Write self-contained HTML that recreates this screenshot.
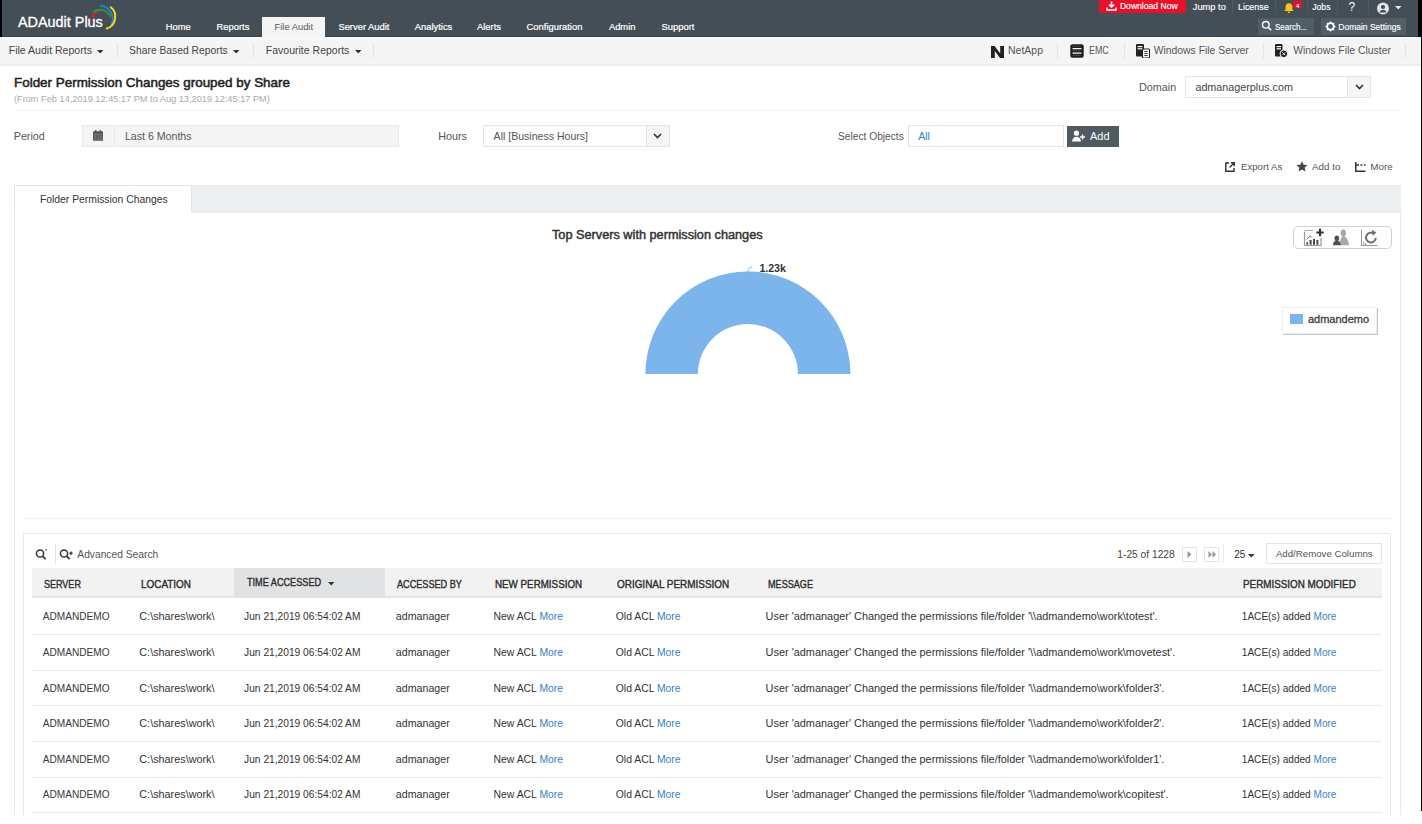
<!DOCTYPE html>
<html><head><meta charset="utf-8"><title>ADAudit Plus</title>
<style>
html,body{margin:0;padding:0;width:1422px;height:824px;overflow:hidden;background:#fff;font-family:"Liberation Sans",sans-serif;}
.t{position:absolute;white-space:nowrap;line-height:1;}
.r{position:absolute;}
.lk{color:#3a80c8;}
</style></head><body>
<div class="r" style="left:0px;top:0px;width:1422px;height:37px;background:#434e56;"></div>
<div class="r" style="left:0px;top:35.5px;width:1418px;height:1.5px;background:#3a444b;"></div>
<div class="r" style="left:0px;top:0px;width:2px;height:37px;background:#000;"></div>
<div class="r" style="left:1418px;top:0px;width:4px;height:37px;background:#000;"></div>
<div class="r" style="left:1421px;top:37px;width:1px;height:774px;background:#000;"></div>
<div class="t" style="left:18.00px;top:15.02px;font-size:14.4px;color:#fff;-webkit-text-stroke:0.35px #fff;">ADAudit Plus</div>
<svg class="r" style="left:88px;top:2px" width="34" height="32" viewBox="88 2 34 32">
<path d="M92.3 17.8 A9 9 0 0 1 108.8 15" stroke="#e8192c" stroke-width="1.8" fill="none"/>
<path d="M93.2 12 A11.6 11.6 0 0 1 110.8 17" stroke="#0aa544" stroke-width="1.9" fill="none"/>
<path d="M100.4 5.8 A13.2 13.2 0 0 1 110.8 25.8" stroke="#1f82d5" stroke-width="1.9" fill="none"/>
<path d="M110.2 6.8 A12.4 12.4 0 0 1 106 28.8" stroke="#fdd51b" stroke-width="2" fill="none"/>
</svg>
<div class="r" style="left:262px;top:16.5px;width:63px;height:20.5px;background:#f5f5f5;"></div>
<div class="t" style="left:165.80px;top:22.09px;font-size:9.4px;color:#fff;-webkit-text-stroke:0.2px #fff;">Home</div>
<div class="t" style="left:216.50px;top:22.09px;font-size:9.4px;color:#fff;-webkit-text-stroke:0.2px #fff;">Reports</div>
<div class="t" style="left:338.40px;top:22.09px;font-size:9.4px;color:#fff;-webkit-text-stroke:0.2px #fff;">Server Audit</div>
<div class="t" style="left:414.80px;top:22.09px;font-size:9.4px;color:#fff;-webkit-text-stroke:0.2px #fff;">Analytics</div>
<div class="t" style="left:477.00px;top:22.09px;font-size:9.4px;color:#fff;-webkit-text-stroke:0.2px #fff;">Alerts</div>
<div class="t" style="left:526.60px;top:22.09px;font-size:9.4px;color:#fff;-webkit-text-stroke:0.2px #fff;">Configuration</div>
<div class="t" style="left:608.90px;top:22.09px;font-size:9.4px;color:#fff;-webkit-text-stroke:0.2px #fff;">Admin</div>
<div class="t" style="left:661.60px;top:22.09px;font-size:9.4px;color:#fff;-webkit-text-stroke:0.2px #fff;">Support</div>
<div class="t" style="left:274.50px;top:22.09px;font-size:9.4px;color:#555;">File Audit</div>
<div class="r" style="left:1099px;top:0px;width:87px;height:12.6px;background:#e8102a;border-radius:0 0 2px 2px;"></div>
<svg class="r" style="left:1106px;top:1px" width="11" height="10" viewBox="0 0 11 10"><path d="M5.5 0.5v5.2M3 3.6l2.5 2.4 2.5-2.4" stroke="#fff" stroke-width="1.6" fill="none"/><path d="M1 6.5v2.5h9v-2.5" stroke="#fff" stroke-width="1.4" fill="none"/></svg>
<div class="t" style="left:1119.90px;top:1.93px;font-size:8.6px;color:#fff;-webkit-text-stroke:0.15px #fff;">Download Now</div>
<div class="t" style="left:1192.80px;top:2.65px;font-size:9.3px;color:#fff;-webkit-text-stroke:0.15px #fff;">Jump to</div>
<div class="r" style="left:1231.5px;top:0px;width:1px;height:14px;background:#505a62;"></div>
<div class="t" style="left:1238.00px;top:2.81px;font-size:8.9px;color:#fff;-webkit-text-stroke:0.15px #fff;">License</div>
<div class="r" style="left:1274.5px;top:0px;width:1px;height:14px;background:#505a62;"></div>
<svg class="r" style="left:1283px;top:2px" width="12" height="12" viewBox="0 0 12 12"><path d="M6 1.2c-2.2 0-3.4 1.7-3.4 3.6v2.6L1.3 9h9.4L9.4 7.4V4.8C9.4 2.9 8.2 1.2 6 1.2z" fill="#f5c518"/><rect x="4.8" y="9.4" width="2.4" height="1.5" rx="0.7" fill="#f5c518"/></svg>
<div class="r" style="left:1293px;top:1px;width:9px;height:6.5px;background:#e8102a;"></div>
<div class="t" style="left:1296.00px;top:2.52px;font-size:6px;font-weight:700;color:#fff;">4</div>
<div class="r" style="left:1306.5px;top:0px;width:1px;height:14px;background:#505a62;"></div>
<div class="t" style="left:1312.30px;top:2.93px;font-size:8.6px;color:#fff;-webkit-text-stroke:0.15px #fff;">Jobs</div>
<div class="r" style="left:1336.5px;top:0px;width:1px;height:14px;background:#505a62;"></div>
<div class="t" style="left:1348.60px;top:1.01px;font-size:12px;color:#fff;">?</div>
<div class="r" style="left:1368px;top:0px;width:1px;height:14px;background:#505a62;"></div>
<svg class="r" style="left:1376px;top:2px" width="14" height="13" viewBox="0 0 14 13"><circle cx="7" cy="6.5" r="6" fill="#e4e4e4"/><circle cx="7" cy="5" r="2.1" fill="#434e56"/><path d="M3.4 10.6c0.7-1.9 2-2.8 3.6-2.8s2.9 0.9 3.6 2.8z" fill="#434e56"/></svg>
<svg class="r" style="left:1395px;top:6px" width="7" height="4" viewBox="0 0 7 4"><path d="M0 0h6.5L3.25 3.6z" fill="#e8e8e8"/></svg>
<div class="r" style="left:1258.2px;top:18px;width:55.7px;height:16.5px;background:#525d65;"></div>
<svg class="r" style="left:1261px;top:20px" width="12" height="12" viewBox="0 0 12 12"><circle cx="4.8" cy="4.8" r="3.3" fill="none" stroke="#fff" stroke-width="1.4"/><path d="M7.2 7.2l3 3" stroke="#fff" stroke-width="1.6"/></svg>
<div class="t" style="left:1275.40px;top:22.78px;font-size:9.0px;color:#fff;-webkit-text-stroke:0.15px #fff;transform:scaleX(0.8911);transform-origin:0 0;">Search...</div>
<div class="r" style="left:1321px;top:18px;width:85px;height:16.5px;background:#525d65;"></div>
<svg class="r" style="left:1325px;top:21px" width="11" height="11" viewBox="0 0 11 11"><circle cx="5.5" cy="5.5" r="3.3" fill="none" stroke="#fff" stroke-width="1.7"/><circle cx="9.60" cy="5.50" r="0.9" fill="#fff"/><circle cx="8.40" cy="8.40" r="0.9" fill="#fff"/><circle cx="5.50" cy="9.60" r="0.9" fill="#fff"/><circle cx="2.60" cy="8.40" r="0.9" fill="#fff"/><circle cx="1.40" cy="5.50" r="0.9" fill="#fff"/><circle cx="2.60" cy="2.60" r="0.9" fill="#fff"/><circle cx="5.50" cy="1.40" r="0.9" fill="#fff"/><circle cx="8.40" cy="2.60" r="0.9" fill="#fff"/></svg>
<div class="t" style="left:1338.30px;top:22.99px;font-size:8.5px;color:#fff;-webkit-text-stroke:0.15px #fff;">Domain Settings</div>
<div class="r" style="left:0px;top:37px;width:1421px;height:29px;background:linear-gradient(#fafafa 0,#f5f5f5 3px);border-bottom:2px solid #eceff0;box-sizing:border-box;"></div>
<div class="t" style="left:8.70px;top:45.11px;font-size:10.55px;color:#444;">File Audit Reports</div>
<svg class="r" style="left:96.5px;top:50px" width="7" height="4" viewBox="0 0 7 4"><path d="M0 0h6.5L3.25 3.5z" fill="#333"/></svg>
<div class="r" style="left:117px;top:43px;width:1px;height:15px;background:#e2e5e7;"></div>
<div class="t" style="left:129.10px;top:45.73px;font-size:10.32px;color:#444;">Share Based Reports</div>
<svg class="r" style="left:232.5px;top:50px" width="7" height="4" viewBox="0 0 7 4"><path d="M0 0h6.5L3.25 3.5z" fill="#333"/></svg>
<div class="r" style="left:253px;top:43px;width:1px;height:15px;background:#e2e5e7;"></div>
<div class="t" style="left:265.80px;top:45.11px;font-size:10.52px;color:#444;">Favourite Reports</div>
<svg class="r" style="left:354.5px;top:50px" width="7" height="4" viewBox="0 0 7 4"><path d="M0 0h6.5L3.25 3.5z" fill="#333"/></svg>
<div class="r" style="left:373px;top:43px;width:1px;height:15px;background:#e2e5e7;"></div>
<svg class="r" style="left:991px;top:45.5px" width="13" height="12.5" viewBox="0 0 13 12.5"><path d="M0 0h3.6l5.6 7.4V0H13v12.5H9.4L3.8 5.1v7.4H0z" fill="#222"/></svg>
<div class="t" style="left:1008.00px;top:45.13px;font-size:10.5px;color:#555;">NetApp</div>
<div class="r" style="left:1056.5px;top:43px;width:1px;height:15px;background:#e2e5e7;"></div>
<svg class="r" style="left:1070px;top:44px" width="14" height="14" viewBox="0 0 14 14"><rect x="0.3" y="0.3" width="13.4" height="13.4" rx="2" fill="#1e1e1e"/><path d="M2.5 4.6h9M2.5 9.2h9" stroke="#f4f4f4" stroke-width="1.3"/><path d="M3 2.2h8M3 6.9h8M3 11.6h8" stroke="#888" stroke-width="0.6" stroke-dasharray="1.5 1"/></svg>
<div class="t" style="left:1089.00px;top:45.13px;font-size:10.5px;color:#555;transform:scaleX(0.8448);transform-origin:0 0;">EMC</div>
<div class="r" style="left:1123.5px;top:43px;width:1px;height:15px;background:#e2e5e7;"></div>
<svg class="r" style="left:1136px;top:44px" width="14" height="14" viewBox="0 0 14 14"><rect x="0" y="0" width="8" height="12.5" rx="1" fill="#222"/><rect x="1.6" y="2" width="4.8" height="1.2" fill="#fff"/><rect x="1.6" y="4.2" width="4.8" height="1.2" fill="#fff"/><rect x="6.5" y="5" width="7" height="9" rx="1" fill="#fff" stroke="#222" stroke-width="1.1"/><path d="M8.3 7.5h3.4M8.3 9.5h3.4M8.3 11.5h3.4" stroke="#222" stroke-width="0.9"/></svg>
<div class="t" style="left:1153.70px;top:45.70px;font-size:10.39px;color:#555;">Windows File Server</div>
<div class="r" style="left:1262.5px;top:43px;width:1px;height:15px;background:#e2e5e7;"></div>
<svg class="r" style="left:1275px;top:44px" width="13" height="14" viewBox="0 0 13 14"><rect x="0" y="0" width="7.5" height="12.5" rx="1" fill="#222"/><rect x="1.5" y="2" width="4.5" height="1.2" fill="#fff"/><rect x="1.5" y="4.2" width="4.5" height="1.2" fill="#fff"/><circle cx="8.8" cy="9.8" r="3.8" fill="#222" stroke="#f4f4f4" stroke-width="1"/><path d="M7.4 8.4l2.8 2.8M10.2 8.4l-2.8 2.8" stroke="#fff" stroke-width="0.9"/></svg>
<div class="t" style="left:1293.20px;top:45.68px;font-size:10.41px;color:#555;">Windows File Cluster</div>
<div class="r" style="left:1404.5px;top:43px;width:1px;height:15px;background:#e2e5e7;"></div>
<div class="t" style="left:14.00px;top:76.69px;font-size:12.8px;color:#222;-webkit-text-stroke:0.5px #222;transform:scaleX(1.0484);transform-origin:0 0;">Folder Permission Changes grouped by Share</div>
<div class="t" style="left:14.00px;top:94.68px;font-size:9.21px;color:#aaa;">(From Feb 14,2019 12:45:17 PM to Aug 13,2019 12:45:17 PM)</div>
<div class="r" style="left:14px;top:110px;width:1387px;height:1px;background:#f0f2f3;"></div>
<div class="t" style="left:1139.00px;top:82.01px;font-size:10.8px;color:#555;">Domain</div>
<div class="r" style="left:1184.8px;top:75.6px;width:186.4px;height:22.7px;background:#fff;border:1px solid #e3e6e8;box-sizing:border-box;"></div>
<div class="r" style="left:1347.2px;top:75.6px;width:24px;height:22.7px;background:#f5f5f5;border:1px solid #e3e6e8;box-sizing:border-box;"></div>
<svg class="r" style="left:1355px;top:84px" width="9" height="6" viewBox="0 0 9 6"><path d="M1 1l3.5 3.5L8 1" stroke="#333" stroke-width="1.6" fill="none"/></svg>
<div class="t" style="left:1195.40px;top:82.01px;font-size:10.77px;color:#444;">admanagerplus.com</div>
<div class="t" style="left:13.80px;top:131.05px;font-size:10.69px;color:#555;">Period</div>
<div class="r" style="left:82.4px;top:124.8px;width:317.1px;height:22.3px;background:#f5f5f5;border:1px solid #e8ebed;box-sizing:border-box;"></div>
<div class="r" style="left:113.5px;top:125.5px;width:1px;height:21px;background:#e6e9eb;"></div>
<svg class="r" style="left:93px;top:130px" width="10" height="11" viewBox="0 0 10 11"><rect x="0" y="1.2" width="10" height="9.6" rx="0.6" fill="#555"/><rect x="0.9" y="3.6" width="8.2" height="6.3" fill="#777"/><path d="M0.9 5.9h8.2M0.9 7.9h8.2M3.6 3.6v6.3M6.4 3.6v6.3" stroke="#555" stroke-width="0.7"/><rect x="2" y="0" width="1.4" height="2.2" fill="#555"/><rect x="6.6" y="0" width="1.4" height="2.2" fill="#555"/></svg>
<div class="t" style="left:124.90px;top:131.08px;font-size:10.62px;color:#555;">Last 6 Months</div>
<div class="t" style="left:438.30px;top:131.01px;font-size:10.76px;color:#555;">Hours</div>
<div class="r" style="left:483.2px;top:124.8px;width:186.3px;height:22.3px;background:#fff;border:1px solid #e3e6e8;box-sizing:border-box;"></div>
<div class="r" style="left:645.5px;top:124.8px;width:24px;height:22.3px;background:#f5f5f5;border:1px solid #e3e6e8;box-sizing:border-box;"></div>
<svg class="r" style="left:653px;top:133px" width="9" height="6" viewBox="0 0 9 6"><path d="M1 1l3.5 3.5L8 1" stroke="#333" stroke-width="1.6" fill="none"/></svg>
<div class="t" style="left:493.60px;top:131.11px;font-size:10.55px;color:#555;">All [Business Hours]</div>
<div class="t" style="left:838.00px;top:131.77px;font-size:10.21px;color:#555;">Select Objects</div>
<div class="r" style="left:907.6px;top:124.5px;width:156.2px;height:22.8px;background:#fff;border:1px solid #e3e6e8;box-sizing:border-box;"></div>
<div class="t" style="left:918.20px;top:131.13px;font-size:10.5px;color:#2a7bd1;">All</div>
<div class="r" style="left:1067px;top:126px;width:52px;height:20.6px;background:#4f5a62;"></div>
<svg class="r" style="left:1072px;top:130px" width="14" height="12" viewBox="0 0 14 12"><circle cx="4.5" cy="3.2" r="2.6" fill="#fff"/><path d="M0 11.5c0.3-3.2 2-4.8 4.5-4.8s4.2 1.6 4.5 4.8z" fill="#fff"/><path d="M10.5 4.5v5M8 7h5" stroke="#fff" stroke-width="1.4"/></svg>
<div class="t" style="left:1090.00px;top:130.97px;font-size:10.96px;color:#fff;">Add</div>
<svg class="r" style="left:1225px;top:162px" width="10" height="10" viewBox="0 0 10 10"><path d="M4 1H0.8v8.2H9V6" stroke="#333" stroke-width="1.4" fill="none"/><path d="M4.5 5.5L9 1M5.8 0.8H9.2V4.2" stroke="#333" stroke-width="1.4" fill="none"/></svg>
<div class="t" style="left:1241.00px;top:162.01px;font-size:9.65px;color:#555;">Export As</div>
<svg class="r" style="left:1296px;top:161px" width="12" height="11" viewBox="0 0 12 11"><path d="M6 0l1.6 3.7 4 0.3-3 2.6 0.9 3.9L6 8.4 2.5 10.5l0.9-3.9-3-2.6 4-0.3z" fill="#444"/></svg>
<div class="t" style="left:1312.00px;top:161.94px;font-size:9.82px;color:#555;">Add to</div>
<svg class="r" style="left:1355px;top:162px" width="11" height="10" viewBox="0 0 11 10"><path d="M0.8 0v9.2H10.5" stroke="#333" stroke-width="1.5" fill="none"/><path d="M0.8 3H4M5.5 3h2M9 3h1.5" stroke="#333" stroke-width="1.4"/></svg>
<div class="t" style="left:1370.30px;top:161.94px;font-size:9.79px;color:#555;">More</div>
<div class="r" style="left:14px;top:185px;width:1387px;height:630px;background:#fff;border:1px solid #e8ebed;border-bottom:none;box-sizing:border-box;"></div>
<div class="r" style="left:14px;top:185px;width:1387px;height:28px;background:#eceff0;"></div>
<div class="r" style="left:14px;top:185px;width:177.5px;height:28px;background:#fff;border:1px solid #e3e6e8;border-bottom:none;box-sizing:border-box;"></div>
<div class="t" style="left:39.90px;top:194.72px;font-size:10.36px;color:#333;">Folder Permission Changes</div>
<div class="t" style="left:552.40px;top:229.01px;font-size:12px;color:#333;-webkit-text-stroke:0.45px #333;transform:scaleX(1.0596);transform-origin:0 0;">Top Servers with permission changes</div>
<svg class="r" style="left:640px;top:260px" width="220" height="120" viewBox="640 260 220 120">
<path d="M645.4 374 A102.5 102.5 0 0 1 850.4 374 L797.9 374 A50 50 0 0 0 697.9 374 Z" fill="#7cb5ec"/>
<path d="M748 272 C748 268 750 267 752 267" stroke="#7cb5ec" stroke-width="1" fill="none"/>
</svg>
<div class="t" style="left:759.40px;top:263.08px;font-size:10.59px;font-weight:700;color:#333;">1.23k</div>
<div class="r" style="left:1292.7px;top:226px;width:99px;height:22.7px;border:1.6px solid #cfd1d3;border-radius:5px;box-sizing:border-box;background:#fff;"></div>
<svg class="r" style="left:1303px;top:228px" width="22" height="19" viewBox="0 0 22 19">
<path d="M1.5 3.5V17.5H18V10" stroke="#999" stroke-width="1.2" fill="none"/><path d="M1.5 2.5H10" stroke="#aaa" stroke-width="1"/>
<path d="M3.5 11.5l3.6-3.6 1.6 1" stroke="#777" stroke-width="1" fill="none"/>
<rect x="3.3" y="14.3" width="1.8" height="2.4" fill="#444"/><rect x="6.6" y="12" width="2" height="4.7" fill="#444"/><rect x="10" y="11" width="2" height="5.7" fill="#444"/><rect x="13.4" y="12" width="2" height="4.7" fill="#444"/>
<path d="M17 0.8v7.4M13.3 4.5h7.4" stroke="#333" stroke-width="2.2"/>
</svg>
<svg class="r" style="left:1332px;top:228px" width="19" height="19" viewBox="0 0 19 19">
<path d="M10.5 1.2c2.2 0 3.6 1.7 3.6 3.8 0 1.6-0.8 2.9-1.9 3.6 2.6 0.7 4.2 3.4 4.9 8.7H7.5c0.3-4.6 1.2-7.7 3-8.7-1.1-0.7-1.9-2-1.9-3.6 0-2.1 1.4-3.8 3.6-3.8z" fill="#a9a9a9"/>
<path d="M4.8 7.6c1.4 0 2.4 1.1 2.4 2.6 0 1-0.5 1.9-1.2 2.4 1.6 0.6 2.6 2.2 2.9 4.6H0.8c0.3-2.4 1.3-4 2.9-4.6-0.7-0.5-1.2-1.4-1.2-2.4 0-1.5 1-2.6 2.3-2.6z" fill="#505050"/>
</svg>
<svg class="r" style="left:1360px;top:228px" width="20" height="19" viewBox="0 0 20 19">
<path d="M1.5 1.5V17.5H17.5" stroke="#999" stroke-width="1" fill="none"/>
<path d="M3.8 17v-3.5M5.8 17v-2" stroke="#999" stroke-width="1"/>
<path d="M15.8 9.8a4.9 4.9 0 1 1 -2-4.2" stroke="#707070" stroke-width="2" fill="none"/><path d="M11.8 1.8l4.6 2.6-3.6 3.4z" fill="#707070"/>
</svg>
<div class="r" style="left:1282.3px;top:307.3px;width:94.7px;height:26.7px;background:#fff;border:1px solid #eceeef;box-shadow:1.3px 1.3px 0.5px #c4c4c4;box-sizing:border-box;"></div>
<div class="r" style="left:1290px;top:314.2px;width:13px;height:9.8px;background:#7cb5ec;"></div>
<div class="t" style="left:1307.90px;top:313.94px;font-size:11px;color:#3d3d3d;-webkit-text-stroke:0.3px #3d3d3d;">admandemo</div>
<div class="r" style="left:22.5px;top:518px;width:1369px;height:1px;background:#eef0f1;"></div>
<div class="r" style="left:23px;top:533.4px;width:1368px;height:282px;border:1px solid #e6e9eb;border-bottom:none;box-sizing:border-box;"></div>
<svg class="r" style="left:35px;top:548px" width="13" height="13" viewBox="0 0 13 13"><circle cx="5" cy="5.5" r="3.6" fill="none" stroke="#333" stroke-width="1.5"/><path d="M7.6 8.1l3 3" stroke="#333" stroke-width="1.7"/><path d="M10 1.5h1.6l-0.8 1.5" stroke="#555" stroke-width="0.7" fill="none"/></svg>
<div class="r" style="left:54.5px;top:543.4px;width:1px;height:20.6px;background:#e3e6e8;"></div>
<svg class="r" style="left:59px;top:548px" width="15" height="13" viewBox="0 0 15 13"><circle cx="5" cy="5.5" r="3.6" fill="none" stroke="#333" stroke-width="1.5"/><path d="M7.6 8.1l3 3" stroke="#333" stroke-width="1.7"/><path d="M12 3.5v3.4M10.3 5.2h3.4" stroke="#333" stroke-width="1.3"/></svg>
<div class="t" style="left:77.30px;top:549.75px;font-size:10.26px;color:#555;">Advanced Search</div>
<div class="t" style="left:1117.30px;top:549.76px;font-size:10.22px;color:#444;">1-25 of 1228</div>
<div class="r" style="left:1182px;top:547.2px;width:15px;height:14.8px;border:1px solid #e3e6e8;box-sizing:border-box;"></div>
<svg class="r" style="left:1187px;top:551px" width="5" height="7" viewBox="0 0 5 7"><path d="M0.5 0l4 3.5-4 3.5z" fill="#999"/></svg>
<div class="r" style="left:1204px;top:547.2px;width:15.2px;height:14.8px;border:1px solid #e3e6e8;box-sizing:border-box;"></div>
<svg class="r" style="left:1207.5px;top:551px" width="9" height="7" viewBox="0 0 9 7"><path d="M0.5 0l3.5 3.5-3.5 3.5zM4.5 0l3.5 3.5-3.5 3.5z" fill="#999"/></svg>
<div class="r" style="left:1223px;top:543px;width:1px;height:20px;background:#e8ebed;"></div>
<div class="t" style="left:1234.20px;top:549.87px;font-size:10px;color:#333;">25</div>
<svg class="r" style="left:1247.5px;top:553.5px" width="7" height="4" viewBox="0 0 7 4"><path d="M0 0h6.5L3.25 3.5z" fill="#333"/></svg>
<div class="r" style="left:1266.1px;top:543.4px;width:115.7px;height:20.5px;background:#fff;border:1px solid #e3e6e8;box-sizing:border-box;"></div>
<div class="t" style="left:1275.90px;top:548.98px;font-size:9.69px;color:#555;">Add/Remove Columns</div>
<div class="r" style="left:32.2px;top:568.3px;width:1349.8px;height:30px;background:#f2f2f2;border-bottom:2px solid #e2e4e5;box-sizing:border-box;"></div>
<div class="r" style="left:234.2px;top:568.3px;width:151.1px;height:28px;background:#e1e2e3;"></div>
<div class="t" style="left:43.70px;top:579.01px;font-size:10.8px;color:#2e2e2e;-webkit-text-stroke:0.4px #2e2e2e;transform:scaleX(0.8345);transform-origin:0 0;">SERVER</div>
<div class="t" style="left:141.40px;top:579.01px;font-size:10.8px;color:#2e2e2e;-webkit-text-stroke:0.4px #2e2e2e;transform:scaleX(0.9190);transform-origin:0 0;">LOCATION</div>
<div class="t" style="left:246.90px;top:577.01px;font-size:10.8px;color:#2e2e2e;-webkit-text-stroke:0.4px #2e2e2e;transform:scaleX(0.8457);transform-origin:0 0;">TIME ACCESSED</div>
<div class="t" style="left:397.00px;top:579.01px;font-size:10.8px;color:#2e2e2e;-webkit-text-stroke:0.4px #2e2e2e;transform:scaleX(0.8448);transform-origin:0 0;">ACCESSED BY</div>
<div class="t" style="left:495.00px;top:579.01px;font-size:10.8px;color:#2e2e2e;-webkit-text-stroke:0.4px #2e2e2e;transform:scaleX(0.9072);transform-origin:0 0;">NEW PERMISSION</div>
<div class="t" style="left:616.90px;top:579.01px;font-size:10.8px;color:#2e2e2e;-webkit-text-stroke:0.4px #2e2e2e;transform:scaleX(0.9195);transform-origin:0 0;">ORIGINAL PERMISSION</div>
<div class="t" style="left:767.70px;top:579.01px;font-size:10.8px;color:#2e2e2e;-webkit-text-stroke:0.4px #2e2e2e;transform:scaleX(0.8424);transform-origin:0 0;">MESSAGE</div>
<div class="t" style="left:1242.80px;top:579.01px;font-size:10.8px;color:#2e2e2e;-webkit-text-stroke:0.4px #2e2e2e;transform:scaleX(0.9126);transform-origin:0 0;">PERMISSION MODIFIED</div>
<svg class="r" style="left:327.5px;top:582px" width="7" height="4" viewBox="0 0 7 4"><path d="M0 0h6.5L3.25 3.5z" fill="#333"/></svg>
<div class="r" style="left:32.2px;top:633.8px;width:1349.8px;height:1px;background:#e6e8ea;"></div>
<div class="t" style="left:42.70px;top:611.81px;font-size:10.13px;color:#3a3a3a;">ADMANDEMO</div>
<div class="t" style="left:139.30px;top:611.02px;font-size:10.84px;color:#333;">C:\shares\work\</div>
<div class="t" style="left:244.10px;top:611.77px;font-size:10.21px;color:#333;">Jun 21,2019 06:54:02 AM</div>
<div class="t" style="left:395.80px;top:611.06px;font-size:10.67px;color:#333;">admanager</div>
<div class="t" style="left:493.50px;top:611.68px;font-size:10.41px;color:#333;">New ACL <span class="lk">More</span></div>
<div class="t" style="left:615.80px;top:611.70px;font-size:10.38px;color:#333;">Old ACL <span class="lk">More</span></div>
<div class="t" style="left:765.60px;top:610.99px;font-size:10.91px;color:#333;">User 'admanager' Changed the permissions file/folder '\\admandemo\work\totest'.</div>
<div class="t" style="left:1241.80px;top:611.83px;font-size:10.08px;color:#333;">1ACE(s) added <span class="lk">More</span></div>
<div class="r" style="left:32.2px;top:670.0px;width:1349.8px;height:1px;background:#e6e8ea;"></div>
<div class="t" style="left:42.70px;top:647.81px;font-size:10.13px;color:#3a3a3a;">ADMANDEMO</div>
<div class="t" style="left:139.30px;top:647.02px;font-size:10.84px;color:#333;">C:\shares\work\</div>
<div class="t" style="left:244.10px;top:647.77px;font-size:10.21px;color:#333;">Jun 21,2019 06:54:02 AM</div>
<div class="t" style="left:395.80px;top:647.06px;font-size:10.67px;color:#333;">admanager</div>
<div class="t" style="left:493.50px;top:647.68px;font-size:10.41px;color:#333;">New ACL <span class="lk">More</span></div>
<div class="t" style="left:615.80px;top:647.70px;font-size:10.38px;color:#333;">Old ACL <span class="lk">More</span></div>
<div class="t" style="left:765.60px;top:646.99px;font-size:10.91px;color:#333;">User 'admanager' Changed the permissions file/folder '\\admandemo\work\movetest'.</div>
<div class="t" style="left:1241.80px;top:647.83px;font-size:10.08px;color:#333;">1ACE(s) added <span class="lk">More</span></div>
<div class="r" style="left:32.2px;top:705.4px;width:1349.8px;height:1px;background:#e6e8ea;"></div>
<div class="t" style="left:42.70px;top:683.81px;font-size:10.13px;color:#3a3a3a;">ADMANDEMO</div>
<div class="t" style="left:139.30px;top:683.02px;font-size:10.84px;color:#333;">C:\shares\work\</div>
<div class="t" style="left:244.10px;top:683.77px;font-size:10.21px;color:#333;">Jun 21,2019 06:54:02 AM</div>
<div class="t" style="left:395.80px;top:683.06px;font-size:10.67px;color:#333;">admanager</div>
<div class="t" style="left:493.50px;top:683.68px;font-size:10.41px;color:#333;">New ACL <span class="lk">More</span></div>
<div class="t" style="left:615.80px;top:683.70px;font-size:10.38px;color:#333;">Old ACL <span class="lk">More</span></div>
<div class="t" style="left:765.60px;top:682.99px;font-size:10.91px;color:#333;">User 'admanager' Changed the permissions file/folder '\\admandemo\work\folder3'.</div>
<div class="t" style="left:1241.80px;top:683.83px;font-size:10.08px;color:#333;">1ACE(s) added <span class="lk">More</span></div>
<div class="r" style="left:32.2px;top:740.9px;width:1349.8px;height:1px;background:#e6e8ea;"></div>
<div class="t" style="left:42.70px;top:718.81px;font-size:10.13px;color:#3a3a3a;">ADMANDEMO</div>
<div class="t" style="left:139.30px;top:718.02px;font-size:10.84px;color:#333;">C:\shares\work\</div>
<div class="t" style="left:244.10px;top:718.77px;font-size:10.21px;color:#333;">Jun 21,2019 06:54:02 AM</div>
<div class="t" style="left:395.80px;top:718.06px;font-size:10.67px;color:#333;">admanager</div>
<div class="t" style="left:493.50px;top:718.68px;font-size:10.41px;color:#333;">New ACL <span class="lk">More</span></div>
<div class="t" style="left:615.80px;top:718.70px;font-size:10.38px;color:#333;">Old ACL <span class="lk">More</span></div>
<div class="t" style="left:765.60px;top:717.99px;font-size:10.91px;color:#333;">User 'admanager' Changed the permissions file/folder '\\admandemo\work\folder2'.</div>
<div class="t" style="left:1241.80px;top:718.83px;font-size:10.08px;color:#333;">1ACE(s) added <span class="lk">More</span></div>
<div class="r" style="left:32.2px;top:776.7px;width:1349.8px;height:1px;background:#e6e8ea;"></div>
<div class="t" style="left:42.70px;top:754.81px;font-size:10.13px;color:#3a3a3a;">ADMANDEMO</div>
<div class="t" style="left:139.30px;top:754.02px;font-size:10.84px;color:#333;">C:\shares\work\</div>
<div class="t" style="left:244.10px;top:754.77px;font-size:10.21px;color:#333;">Jun 21,2019 06:54:02 AM</div>
<div class="t" style="left:395.80px;top:754.06px;font-size:10.67px;color:#333;">admanager</div>
<div class="t" style="left:493.50px;top:754.68px;font-size:10.41px;color:#333;">New ACL <span class="lk">More</span></div>
<div class="t" style="left:615.80px;top:754.70px;font-size:10.38px;color:#333;">Old ACL <span class="lk">More</span></div>
<div class="t" style="left:765.60px;top:753.99px;font-size:10.91px;color:#333;">User 'admanager' Changed the permissions file/folder '\\admandemo\work\folder1'.</div>
<div class="t" style="left:1241.80px;top:754.83px;font-size:10.08px;color:#333;">1ACE(s) added <span class="lk">More</span></div>
<div class="r" style="left:32.2px;top:812.1px;width:1349.8px;height:1px;background:#e6e8ea;"></div>
<div class="t" style="left:42.70px;top:789.81px;font-size:10.13px;color:#3a3a3a;">ADMANDEMO</div>
<div class="t" style="left:139.30px;top:789.02px;font-size:10.84px;color:#333;">C:\shares\work\</div>
<div class="t" style="left:244.10px;top:789.77px;font-size:10.21px;color:#333;">Jun 21,2019 06:54:02 AM</div>
<div class="t" style="left:395.80px;top:789.06px;font-size:10.67px;color:#333;">admanager</div>
<div class="t" style="left:493.50px;top:789.68px;font-size:10.41px;color:#333;">New ACL <span class="lk">More</span></div>
<div class="t" style="left:615.80px;top:789.70px;font-size:10.38px;color:#333;">Old ACL <span class="lk">More</span></div>
<div class="t" style="left:765.60px;top:788.99px;font-size:10.91px;color:#333;">User 'admanager' Changed the permissions file/folder '\\admandemo\work\copitest'.</div>
<div class="t" style="left:1241.80px;top:789.83px;font-size:10.08px;color:#333;">1ACE(s) added <span class="lk">More</span></div>
</body></html>
